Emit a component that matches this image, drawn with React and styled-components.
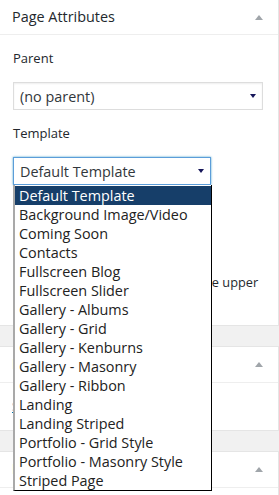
import React from "react";
import styled, { createGlobalStyle } from "styled-components";

const Global = createGlobalStyle`
  html, body { margin: 0; padding: 0; background: #f1f1f1; }
  body { font-family: "Open Sans", "Liberation Sans", sans-serif; color: #23282d; }
  * { box-sizing: border-box; }
`;

const Page = styled.div`
  width: 279px;
  height: 495px;
  overflow: hidden;
  display: flex;
  flex-direction: column;
  gap: 20px;
`;

const Postbox = styled.section`
  background: #fff;
  border-right: 1px solid #e5e5e5;
  border-bottom: 1px solid #e5e5e5;
  border-top: ${(p) => (p.$first ? "none" : "1px solid #e5e5e5")};
  flex-shrink: 0;
`;

const Header = styled.div`
  height: ${(p) => (p.$first ? "35px" : "36px")};
  display: flex;
  align-items: center;
  justify-content: space-between;
  padding: 0 15px 0 12px;
  border-bottom: 1px solid #eee;
  font-size: 14.4px;
  line-height: 1;
  color: #23282d;
`;

const Toggle = styled.span`
  width: 0;
  height: 0;
  border-left: 4px solid transparent;
  border-right: 4px solid transparent;
  border-bottom: 5px solid #a0a5aa;
`;

const Inside = styled.div`
  padding: ${(p) => p.$pad || "0 12px 13px 13px"};
  font-size: 13px;
  position: relative;
`;

const Label = styled.p`
  margin: ${(p) => p.$m || "0"};
  font-size: 13px;
  line-height: 18px;
  color: #23282d;
`;

const SelectWrap = styled.div`
  position: relative;
  width: ${(p) => p.$w}px;
  z-index: ${(p) => (p.$open ? 10 : 1)};
`;

const SelectBox = styled.div`
  height: 28px;
  display: flex;
  align-items: center;
  justify-content: space-between;
  padding: 0 6px 0 6px;
  background: #fff;
  border: 1px solid ${(p) => (p.$focus ? "#5b9dd9" : "#ddd")};
  box-shadow: ${(p) =>
    p.$focus ? "0 0 2px rgba(30,140,190,.8)" : "inset 0 1px 2px rgba(0,0,0,.07)"};
  font-size: 14.4px;
  color: #32373c;
`;

const Arrow = styled.span`
  width: 0;
  height: 0;
  border-left: 3.5px solid transparent;
  border-right: 3.5px solid transparent;
  border-top: 4px solid #16165a;
`;

const List = styled.ul`
  position: absolute;
  top: 100%;
  left: 0;
  width: 199px;
  margin: 0;
  padding: 1px 0 0 0;
  list-style: none;
  background: #fff;
  border-left: 2px solid #a9a9a9;
  border-right: 1px solid #000;
  border-bottom: 1px solid #000;
`;

const Item = styled.li`
  height: 19px;
  line-height: 19px;
  padding-left: 4px;
  font-size: 14.4px;
  white-space: nowrap;
  color: ${(p) => (p.$active ? "#fff" : "#222")};
  background: ${(p) => (p.$active ? "#163e69" : "transparent")};
`;

const OrderInput = styled.div`
  width: 48px;
  height: 28px;
  border: 1px solid #ddd;
  margin-top: 6px;
`;

const Help = styled.p`
  margin: 22px 0 0 0;
  font-size: 12.75px;
  line-height: 19.5px;
  color: #23282d;
`;

const Link = styled.a`
  display: block;
  color: #0073aa;
  text-decoration: underline;
  font-size: 13px;
  line-height: 18px;
`;

const options = [
  "Default Template",
  "Background Image/Video",
  "Coming Soon",
  "Contacts",
  "Fullscreen Blog",
  "Fullscreen Slider",
  "Gallery - Albums",
  "Gallery - Grid",
  "Gallery - Kenburns",
  "Gallery - Masonry",
  "Gallery - Ribbon",
  "Landing",
  "Landing Striped",
  "Portfolio - Grid Style",
  "Portfolio - Masonry Style",
  "Striped Page",
];

export default function App() {
  return (
    <>
      <Global />
      <Page>
        <Postbox $first>
          <Header $first>
            <span>Page Attributes</span>
            <Toggle />
          </Header>
          <Inside>
            <Label $m="14px 0 15px 0">Parent</Label>
            <SelectWrap $w={250}>
              <SelectBox>
                <span>(no parent)</span>
                <Arrow />
              </SelectBox>
            </SelectWrap>
            <Label $m="14px 0 15px 0">Template</Label>
            <SelectWrap $w={198} $open>
              <SelectBox $focus>
                <span>Default Template</span>
                <Arrow />
              </SelectBox>
              <List>
                {options.map((o, i) => (
                  <Item key={o} $active={i === 0}>
                    {o}
                  </Item>
                ))}
              </List>
            </SelectWrap>
            <Label $m="14px 0 0 0">Order</Label>
            <OrderInput />
            <Help>
              Need help? Use the Help tab in the upper right of your screen.
            </Help>
          </Inside>
        </Postbox>
        <Postbox>
          <Header>
            <span>Featured Image</span>
            <Toggle />
          </Header>
          <Inside $pad="14px 12px 15px 12px">
            <Link>Set featured image</Link>
          </Inside>
        </Postbox>
        <Postbox>
          <Header>
            <span>Page Options</span>
            <Toggle />
          </Header>
          <Inside $pad="40px 12px" />
        </Postbox>
      </Page>
    </>
  );
}
